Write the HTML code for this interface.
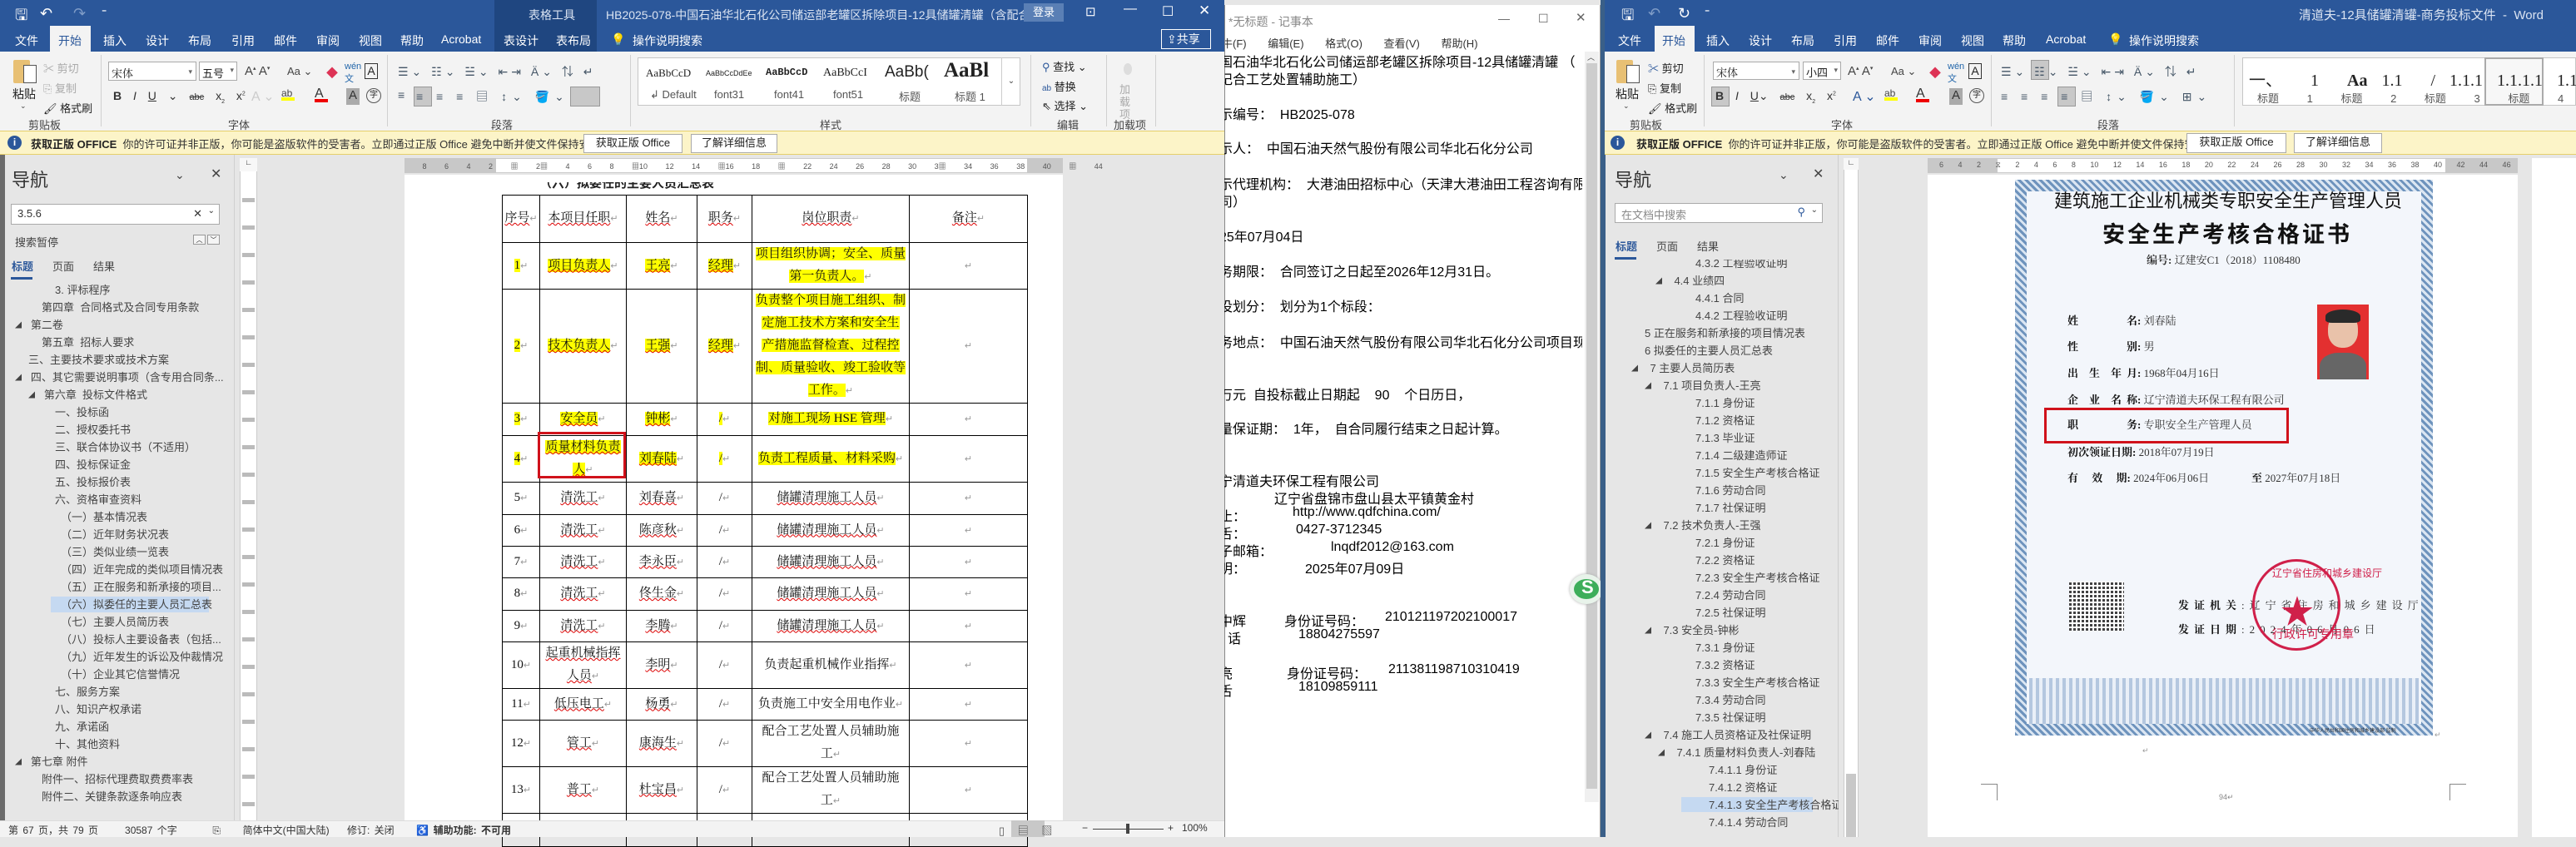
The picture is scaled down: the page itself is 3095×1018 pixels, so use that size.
<!DOCTYPE html>
<html><head><meta charset="utf-8">
<style>
*{margin:0;padding:0;box-sizing:border-box}
body{width:3095px;height:1006px;overflow:hidden;position:relative;background:#e6e6e6;font-family:"Liberation Sans","Noto Sans CJK SC",sans-serif;color:#222}
.a{position:absolute;white-space:nowrap}
.blue{background:#2b579a}
.w{color:#fff}
.tab{position:absolute;top:39px;font-size:14px;color:#fff}
.rib{background:#f3f3f3}
.g{font-size:13px;color:#444}
.sep{position:absolute;width:1px;background:#d0d0d0}
.nav{font-size:13px;color:#444}
.nav div{height:21px;overflow:visible}
.nav div span{vertical-align:middle;line-height:0}
.yb{background:#fcf4c8;border-top:1px solid #e6cf6a;border-bottom:1px solid #e6cf6a}
.btn{position:absolute;background:#fff;border:1px solid #aaa;font-size:13px;color:#222;text-align:center;line-height:20px}
table{border-collapse:collapse;table-layout:fixed}
td{border:1.5px solid #000;text-align:center;vertical-align:middle;font-size:15px;line-height:27px;color:#111;font-family:"Liberation Serif","Noto Serif CJK SC",serif}
.h{background:#ff0}
.r{color:#999;font-size:11px}
.u{text-decoration:underline wavy #d00;text-decoration-thickness:1px}
.np{position:absolute;font-size:16px;color:#000;font-family:"Liberation Sans","Noto Sans CJK SC",sans-serif;white-space:nowrap}
.cf{position:absolute;font-size:13px;color:#333;font-family:"Liberation Serif","Noto Serif CJK SC",serif;white-space:nowrap}
.cl{font-weight:bold;color:#111}
</style></head><body>

<!-- ================= LEFT WORD ================= -->
<div class="a blue" style="left:0;top:0;width:1471px;height:62px"></div>
<div class="a" style="left:594px;top:0;width:123px;height:62px;background:#1f4680"></div>
<div class="a w" style="left:18px;top:6px;font-size:18px">🖫</div>
<div class="a w" style="left:48px;top:6px;font-size:18px">↶</div>
<div class="a" style="left:88px;top:6px;font-size:18px;color:#7f9cc7">↷</div>
<div class="a w" style="left:122px;top:8px;font-size:12px">⁼</div>
<div class="a" style="left:635px;top:8px;font-size:14px;color:#dbe4f2">表格工具</div>
<div class="a" style="left:728px;top:8px;font-size:14px;color:#dbe4f2">HB2025-078-中国石油华北石化公司储运部老罐区拆除项目-12具储罐清罐（含配合工艺...</div>
<div class="a" style="left:1230px;top:4px;width:48px;height:22px;background:#5a7fb5;color:#fff;font-size:13px;text-align:center;line-height:22px">登录</div>
<div class="a w" style="left:1304px;top:5px;font-size:15px">⊡</div>
<div class="a w" style="left:1350px;top:2px;font-size:16px">—</div>
<div class="a w" style="left:1396px;top:4px;font-size:16px">☐</div>
<div class="a w" style="left:1440px;top:3px;font-size:17px">✕</div>
<div class="a" style="left:60px;top:31px;width:49px;height:32px;background:#f3f3f3"></div>
<div class="tab" style="left:18px">文件</div>
<div class="tab" style="left:70px;color:#2b579a">开始</div>
<div class="tab" style="left:124px">插入</div>
<div class="tab" style="left:175px">设计</div>
<div class="tab" style="left:226px">布局</div>
<div class="tab" style="left:278px">引用</div>
<div class="tab" style="left:329px">邮件</div>
<div class="tab" style="left:380px">审阅</div>
<div class="tab" style="left:431px">视图</div>
<div class="tab" style="left:481px">帮助</div>
<div class="tab" style="left:530px">Acrobat</div>
<div class="tab" style="left:605px">表设计</div>
<div class="tab" style="left:668px">表布局</div>
<div class="tab" style="left:734px">💡</div>
<div class="tab" style="left:760px">操作说明搜索</div>
<div class="a" style="left:1395px;top:35px;width:60px;height:24px;border:1px solid #fff;color:#fff;font-size:14px;line-height:22px;padding-left:6px">⇪共享</div>

<div class="a rib" style="left:0;top:62px;width:1471px;height:95px"></div>
<div class="a" style="left:16px;top:72px;width:20px;height:28px;background:#e8c074;border-radius:2px"></div>
<div class="a" style="left:28px;top:78px;width:16px;height:22px;background:#fff;border:1px solid #555"></div>
<div class="a g" style="left:15px;top:103px;font-size:14px;color:#222">粘贴</div>
<div class="a g" style="left:24px;top:122px;font-size:9px">⌄</div>
<div class="a g" style="left:52px;top:72px;color:#aaa">✂ 剪切</div>
<div class="a g" style="left:52px;top:96px;color:#aaa">⎘ 复制</div>
<div class="a g" style="left:52px;top:120px;color:#222">🖌 格式刷</div>
<div class="a g" style="left:34px;top:140px">剪贴板</div>
<div class="sep" style="left:121px;top:66px;height:86px"></div>
<div class="a" style="left:130px;top:74px;width:106px;height:23px;background:#fff;border:1px solid #aaa;font-size:13px;padding:3px 3px;font-family:'Noto Serif CJK SC',serif">宋体<span style="position:absolute;right:4px;top:4px;font-size:9px;color:#666">▾</span></div>
<div class="a" style="left:239px;top:74px;width:46px;height:23px;background:#fff;border:1px solid #aaa;font-size:13px;padding:3px 3px">五号<span style="position:absolute;right:3px;top:4px;font-size:9px;color:#666">▾</span></div>
<div class="a g" style="left:294px;top:77px;font-size:15px">A<sup style="font-size:7px">▴</sup> A<sup style="font-size:7px">▾</sup></div>
<div class="a g" style="left:345px;top:78px;font-size:13px">Aa ⌄</div>
<div class="a" style="left:392px;top:78px;font-size:14px;color:#d35">◆</div>
<div class="a" style="left:414px;top:74px;font-size:11px;color:#26a">wén<br>文</div>
<div class="a" style="left:438px;top:76px;width:16px;height:19px;border:1px solid #333;font-size:14px;text-align:center;line-height:17px">A</div>
<div class="a" style="left:136px;top:107px;font-size:14px;color:#333;word-spacing:10px"><b>B</b> <i>I</i> <u>U</u> ⌄ <s style="font-size:11px">abc</s> x<sub style="font-size:7px">2</sub> x<sup style="font-size:7px">2</sup></div>
<div class="a" style="left:302px;top:106px;font-size:16px;color:#ccc">A ⌄</div>
<div class="a" style="left:338px;top:105px;font-size:12px;color:#444">ab<br><span style="display:block;width:16px;height:4px;background:#ff0;margin-top:-2px"></span></div>
<div class="a" style="left:378px;top:104px;font-size:16px;color:#333">A<span style="display:block;width:16px;height:4px;background:#e00;margin-top:-3px"></span></div>
<div class="a" style="left:416px;top:106px;width:16px;height:20px;background:#aaa;font-size:15px;text-align:center;color:#333">A</div>
<div class="a" style="left:440px;top:106px;width:18px;height:18px;border:1px solid #555;border-radius:50%;font-size:10px;text-align:center;line-height:16px">字</div>
<div class="a g" style="left:274px;top:140px">字体</div>
<div class="sep" style="left:465px;top:66px;height:86px"></div>
<div class="a" style="left:478px;top:76px;font-size:14px;color:#456;letter-spacing:4px">☰⌄ ☷⌄ ☱⌄ ⇤⇥ Ä⌄ ⇅ ↵</div>
<div class="a" style="left:478px;top:106px;font-size:14px;color:#456;letter-spacing:5px">≡</div>
<div class="a" style="left:497px;top:104px;width:22px;height:24px;background:#c8c8c8;border:1px solid #999"></div>
<div class="a" style="left:500px;top:106px;font-size:14px;color:#456;letter-spacing:6px">≡ ≡ ≡ ▤ ↕⌄ 🪣⌄</div>
<div class="a" style="left:685px;top:104px;width:36px;height:24px;background:#c8c8c8;border:1px solid #999"></div>
<div class="a g" style="left:590px;top:140px">段落</div>
<div class="sep" style="left:757px;top:66px;height:86px"></div>
<div class="a" style="left:766px;top:69px;width:460px;height:58px;background:#fff;border:1px solid #c6c6c6"></div>
<div class="a" style="left:1203px;top:69px;width:23px;height:58px;border-left:1px solid #ccc;font-size:10px;text-align:center;line-height:58px;color:#444">⌄</div>
<div class="a" style="left:776px;top:80px;font-size:13px;font-family:'Liberation Serif',serif">AaBbCcD</div>
<div class="a" style="left:848px;top:83px;font-size:9px">AaBbCcDdEe</div>
<div class="a" style="left:920px;top:80px;font-size:12px;font-weight:bold;font-family:'Liberation Mono',monospace">AaBbCcD</div>
<div class="a" style="left:989px;top:80px;font-size:14px;font-family:'Liberation Serif',serif">AaBbCcI</div>
<div class="a" style="left:1063px;top:76px;font-size:19px">AaBb(</div>
<div class="a" style="left:1134px;top:71px;font-size:25px;font-weight:bold;font-family:'Liberation Serif',serif">AaBl</div>
<div class="a g" style="left:781px;top:106px;color:#555">↲ Default</div>
<div class="a g" style="left:858px;top:106px;color:#555">font31</div>
<div class="a g" style="left:930px;top:106px;color:#555">font41</div>
<div class="a g" style="left:1001px;top:106px;color:#555">font51</div>
<div class="a g" style="left:1080px;top:106px;color:#555">标题</div>
<div class="a g" style="left:1147px;top:106px;color:#555">标题 1</div>
<div class="a g" style="left:985px;top:140px">样式</div>
<div class="sep" style="left:1238px;top:66px;height:86px"></div>
<div class="a g" style="left:1252px;top:70px;color:#222"><span style="color:#2b579a">⚲</span> 查找 ⌄</div>
<div class="a g" style="left:1252px;top:94px;color:#222"><span style="color:#2b579a;font-size:10px">ab</span> 替换</div>
<div class="a g" style="left:1252px;top:117px;color:#222">⇖ 选择 ⌄</div>
<div class="a g" style="left:1270px;top:140px">编辑</div>
<div class="sep" style="left:1329px;top:66px;height:86px"></div>
<div class="a" style="left:1350px;top:76px;width:10px;height:14px;border-radius:50%;background:#ddd"></div>
<div class="a g" style="left:1345px;top:100px;color:#aaa;white-space:normal;width:20px;line-height:15px">加载项</div>
<div class="a g" style="left:1338px;top:140px">加载项</div>
<div class="sep" style="left:1388px;top:66px;height:86px"></div>

<div class="a yb" style="left:0;top:157px;width:1471px;height:29px"></div>
<div class="a" style="left:9px;top:163px;width:17px;height:17px;border-radius:50%;background:#2b579a;color:#fff;font-size:12px;text-align:center;line-height:17px;font-weight:bold">i</div>
<div class="a" style="left:37px;top:163px;font-size:13px"><b>获取正版 OFFICE</b>&nbsp;&nbsp;<span style="color:#333">你的许可证并非正版，你可能是盗版软件的受害者。立即通过正版 Office 避免中断并使文件保持安全。</span></div>
<div class="btn" style="left:701px;top:161px;width:119px;height:23px">获取正版 Office</div>
<div class="btn" style="left:830px;top:161px;width:104px;height:23px">了解详细信息</div>

<!-- left nav -->
<div class="a" style="left:0;top:186px;width:6px;height:800px;background:#6b6b6b"></div>
<div class="a" style="left:6px;top:186px;width:276px;height:800px;background:#e6e6e6;border-right:1px solid #cfcfcf"></div>
<div class="a" style="left:14px;top:199px;font-size:22px;color:#333">导航</div>
<div class="a" style="left:210px;top:202px;font-size:14px;color:#444">⌄</div>
<div class="a" style="left:253px;top:199px;font-size:16px;color:#444">✕</div>
<div class="a" style="left:13px;top:245px;width:251px;height:25px;background:#fff;border:1px solid #aaa;font-size:13px;padding:3px 7px;color:#333">3.5.6<span style="position:absolute;right:20px;top:3px">✕</span><span style="position:absolute;right:5px;top:2px;font-size:10px">⌄</span></div>
<div class="a nav" style="left:18px;top:281px">搜索暂停</div>
<div class="a" style="left:232px;top:282px;width:15px;height:12px;border:1px solid #999;background:#f5f5f5;font-size:8px;text-align:center">︿</div>
<div class="a" style="left:249px;top:282px;width:15px;height:12px;border:1px solid #999;background:#f5f5f5;font-size:8px;text-align:center">﹀</div>
<div class="a" style="left:14px;top:310px;font-size:13px;color:#2b579a;font-weight:bold">标题</div>
<div class="a" style="left:13px;top:333px;width:26px;height:3px;background:#2b579a"></div>
<div class="a nav" style="left:63px;top:310px">页面</div>
<div class="a nav" style="left:112px;top:310px">结果</div>
<div class="a" style="left:61px;top:717px;width:190px;height:19px;background:#c5d9f1"></div>
<div class="a nav" style="left:0;top:338px;line-height:21px">
<div style="padding-left:66px">3. 评标程序</div>
<div style="padding-left:50px">第四章&nbsp; 合同格式及合同专用条款</div>
<div style="padding-left:18px"><span style="font-size:8px">◢</span>&nbsp;&nbsp;&nbsp;第二卷</div>
<div style="padding-left:50px">第五章&nbsp; 招标人要求</div>
<div style="padding-left:34px">三、主要技术要求或技术方案</div>
<div style="padding-left:18px"><span style="font-size:8px">◢</span>&nbsp;&nbsp;&nbsp;四、其它需要说明事项（含专用合同条...</div>
<div style="padding-left:34px"><span style="font-size:8px">◢</span>&nbsp;&nbsp;&nbsp;第六章&nbsp; 投标文件格式</div>
<div style="padding-left:66px">一、投标函</div>
<div style="padding-left:66px">二、授权委托书</div>
<div style="padding-left:66px">三、联合体协议书（不适用）</div>
<div style="padding-left:66px">四、投标保证金</div>
<div style="padding-left:66px">五、投标报价表</div>
<div style="padding-left:66px">六、资格审查资料</div>
<div style="padding-left:73px">（一）基本情况表</div>
<div style="padding-left:73px">（二）近年财务状况表</div>
<div style="padding-left:73px">（三）类似业绩一览表</div>
<div style="padding-left:73px">（四）近年完成的类似项目情况表</div>
<div style="padding-left:73px">（五）正在服务和新承接的项目...</div>
<div style="padding-left:73px">（六）拟委任的主要人员汇总表</div>
<div style="padding-left:73px">（七）主要人员简历表</div>
<div style="padding-left:73px">（八）投标人主要设备表（包括...</div>
<div style="padding-left:73px">（九）近年发生的诉讼及仲裁情况</div>
<div style="padding-left:73px">（十）企业其它信誉情况</div>
<div style="padding-left:66px">七、服务方案</div>
<div style="padding-left:66px">八、知识产权承诺</div>
<div style="padding-left:66px">九、承诺函</div>
<div style="padding-left:66px">十、其他资料</div>
<div style="padding-left:18px"><span style="font-size:8px">◢</span>&nbsp;&nbsp;&nbsp;第七章 附件</div>
<div style="padding-left:50px">附件一、招标代理费取费费率表</div>
<div style="padding-left:50px">附件二、关键条款逐条响应表</div>
</div>
<div class="a" style="left:288px;top:190px;width:21px;height:796px;background:#fff;border-left:1px solid #ccc;border-right:1px solid #ccc"></div>
<div class="a" style="left:288px;top:190px;width:21px;height:16px;background:#f7f7f7;font-size:9px;text-align:center">∟</div>
<div class="a" style="left:291px;top:210px;width:15px;height:770px;background:repeating-linear-gradient(to bottom,transparent 0 28px,#bbb 28px 33px)"></div>
<div class="a" style="left:486px;top:190px;width:791px;height:18px;background:#fff;border:1px solid #ccc"></div>
<div class="a" style="left:486px;top:190px;width:110px;height:18px;background:#c8c8c8"></div>
<div class="a" style="left:1234px;top:190px;width:43px;height:18px;background:#c8c8c8"></div>
<div class="a" style="left:486px;top:193px;width:790px;font-size:9px;color:#555;word-spacing:19px">&nbsp;8 6 4 2 ▦ 2▦ 4 6 8 ▦10 12 14 ▦16 18 ▦ 22 24 26 28 30 3▦ 34 36 38 40 ▦ 44</div>
<div class="a" style="left:486px;top:210px;width:791px;height:776px;background:#fff"></div>
<div class="a" style="left:648px;top:209px;font-size:15px;color:#222;font-weight:bold;clip-path:inset(10px 0 0 0)">（六）拟委任的主要人员汇总表</div>
<div class="a" style="left:603px;top:234px">
<table style="width:631px">
<colgroup><col style="width:45px"><col style="width:104px"><col style="width:85px"><col style="width:66px"><col style="width:189px"><col style="width:142px"></colgroup>
<tr style="height:57px"><td><span class="u">序号</span><span class="r">↵</span></td><td><span class="u">本项目任职</span><span class="r">↵</span></td><td><span class="u">姓名</span><span class="r">↵</span></td><td><span class="u">职务</span><span class="r">↵</span></td><td><span class="u">岗位职责</span><span class="r">↵</span></td><td><span class="u">备注</span><span class="r">↵</span></td></tr>
<tr style="height:54px"><td><span class="h">1</span><span class="r">↵</span></td><td><span class="h u">项目负责人</span><span class="r">↵</span></td><td><span class="h u">王亮</span><span class="r">↵</span></td><td><span class="h u">经理</span><span class="r">↵</span></td><td><span class="h">项目组织协调；安全、质量<br>第一负责人。</span><span class="r">↵</span></td><td><span class="r">↵</span></td></tr>
<tr style="height:137px"><td><span class="h">2</span><span class="r">↵</span></td><td><span class="h u">技术负责人</span><span class="r">↵</span></td><td><span class="h u">王强</span><span class="r">↵</span></td><td><span class="h u">经理</span><span class="r">↵</span></td><td><span class="h">负责整个项目施工组织、制<br>定施工技术方案和安全生<br>产措施监督检查、过程控<br>制、质量验收、竣工验收等<br>工作。</span><span class="r">↵</span></td><td><span class="r">↵</span></td></tr>
<tr style="height:39px"><td><span class="h">3</span><span class="r">↵</span></td><td><span class="h u">安全员</span><span class="r">↵</span></td><td><span class="h u">钟彬</span><span class="r">↵</span></td><td><span class="h">/</span><span class="r">↵</span></td><td><span class="h">对施工现场 HSE 管理</span><span class="r">↵</span></td><td><span class="r">↵</span></td></tr>
<tr style="height:55px"><td><span class="h">4</span><span class="r">↵</span></td><td><span class="h u">质量材料负责<br>人</span><span class="r">↵</span></td><td><span class="h u">刘春陆</span><span class="r">↵</span></td><td><span class="h">/</span><span class="r">↵</span></td><td><span class="h">负责工程质量、材料采购</span><span class="r">↵</span></td><td><span class="r">↵</span></td></tr>
<tr style="height:39px"><td>5<span class="r">↵</span></td><td><span class="u">清洗工</span><span class="r">↵</span></td><td><span class="u">刘春喜</span><span class="r">↵</span></td><td>/<span class="r">↵</span></td><td><span class="u">储罐清理施工人员</span><span class="r">↵</span></td><td><span class="r">↵</span></td></tr>
<tr style="height:38px"><td>6<span class="r">↵</span></td><td><span class="u">清洗工</span><span class="r">↵</span></td><td><span class="u">陈彦秋</span><span class="r">↵</span></td><td>/<span class="r">↵</span></td><td><span class="u">储罐清理施工人员</span><span class="r">↵</span></td><td><span class="r">↵</span></td></tr>
<tr style="height:38px"><td>7<span class="r">↵</span></td><td><span class="u">清洗工</span><span class="r">↵</span></td><td><span class="u">李永臣</span><span class="r">↵</span></td><td>/<span class="r">↵</span></td><td><span class="u">储罐清理施工人员</span><span class="r">↵</span></td><td><span class="r">↵</span></td></tr>
<tr style="height:39px"><td>8<span class="r">↵</span></td><td><span class="u">清洗工</span><span class="r">↵</span></td><td><span class="u">佟生金</span><span class="r">↵</span></td><td>/<span class="r">↵</span></td><td><span class="u">储罐清理施工人员</span><span class="r">↵</span></td><td><span class="r">↵</span></td></tr>
<tr style="height:38px"><td>9<span class="r">↵</span></td><td><span class="u">清洗工</span><span class="r">↵</span></td><td><span class="u">李腾</span><span class="r">↵</span></td><td>/<span class="r">↵</span></td><td><span class="u">储罐清理施工人员</span><span class="r">↵</span></td><td><span class="r">↵</span></td></tr>
<tr style="height:56px"><td>10<span class="r">↵</span></td><td><span class="u">起重机械指挥<br>人员</span><span class="r">↵</span></td><td><span class="u">李明</span><span class="r">↵</span></td><td>/<span class="r">↵</span></td><td>负责起重机械作业指挥<span class="r">↵</span></td><td><span class="r">↵</span></td></tr>
<tr style="height:38px"><td>11<span class="r">↵</span></td><td><span class="u">低压电工</span><span class="r">↵</span></td><td><span class="u">杨勇</span><span class="r">↵</span></td><td>/<span class="r">↵</span></td><td>负责施工中安全用电作业<span class="r">↵</span></td><td><span class="r">↵</span></td></tr>
<tr style="height:55px"><td>12<span class="r">↵</span></td><td><span class="u">管工</span><span class="r">↵</span></td><td><span class="u">康海生</span><span class="r">↵</span></td><td>/<span class="r">↵</span></td><td>配合工艺处置人员辅助施<br>工<span class="r">↵</span></td><td><span class="r">↵</span></td></tr>
<tr style="height:56px"><td>13<span class="r">↵</span></td><td><span class="u">普工</span><span class="r">↵</span></td><td><span class="u">杜宝昌</span><span class="r">↵</span></td><td>/<span class="r">↵</span></td><td>配合工艺处置人员辅助施<br>工<span class="r">↵</span></td><td><span class="r">↵</span></td></tr>
<tr style="height:40px"><td></td><td></td><td></td><td></td><td></td><td></td></tr>
</table></div>
<div class="a" style="left:646px;top:519px;width:106px;height:56px;border:3px solid #d0121b"></div>
<div class="a" style="left:0;top:986px;width:1471px;height:20px;background:#f3f3f3;border-top:1px solid #ddd"></div>
<div class="a" style="left:10px;top:989px;font-size:12px;color:#333;word-spacing:2px">第 67 页，共 79 页&nbsp;&nbsp;&nbsp;&nbsp;&nbsp;&nbsp;30587 个字&nbsp;&nbsp;&nbsp;&nbsp;&nbsp;&nbsp;&nbsp;&nbsp;⎘&nbsp;&nbsp;&nbsp;&nbsp;&nbsp;简体中文(中国大陆)&nbsp;&nbsp;&nbsp;&nbsp;修订: 关闭&nbsp;&nbsp;&nbsp;&nbsp;&nbsp;♿ <b>辅助功能: 不可用</b></div>
<div class="a" style="left:1215px;top:986px;width:40px;height:20px;background:#c8c8c8"></div>
<div class="a" style="left:1200px;top:988px;font-size:13px;color:#555;word-spacing:12px">▯ ▤ ▧</div>
<div class="a" style="left:1300px;top:988px;font-size:12px;color:#333">−</div>
<div class="a" style="left:1313px;top:996px;width:85px;height:1px;background:#444"></div>
<div class="a" style="left:1353px;top:990px;width:4px;height:12px;background:#444"></div>
<div class="a" style="left:1403px;top:988px;font-size:12px;color:#333">+&nbsp;&nbsp;&nbsp;100%</div>

<!-- ================= NOTEPAD ================= -->
<div class="a" style="left:1471px;top:6px;width:452px;height:1000px;background:#fff;border-left:1px solid #888;border-right:1px solid #999;overflow:hidden">
  <div class="a" style="left:4px;top:10px;font-size:14px;color:#888">*无标题 - 记事本</div>
  <div class="a" style="left:328px;top:8px;font-size:14px;color:#666">—</div>
  <div class="a" style="left:376px;top:8px;font-size:14px;color:#666">☐</div>
  <div class="a" style="left:421px;top:6px;font-size:15px;color:#666">✕</div>
  <div class="a" style="left:-4px;top:36px;font-size:13px;color:#333;word-spacing:22px">牛(F) 编辑(E) 格式(O) 查看(V) 帮助(H)</div>
  <div class="a" style="left:432px;top:56px;width:17px;height:902px;background:#f0f0f0"></div>
  <div class="a" style="left:434px;top:70px;width:13px;height:872px;background:#cdcdcd"></div>
  <div class="a" style="left:435px;top:56px;font-size:9px;color:#444">︿</div>
</div>
<div class="a" style="left:1471px;top:61px;width:430px;height:900px;overflow:hidden">
<div class="np" style="left:-6px;top:0">国石油华北石化公司储运部老罐区拆除项目-12具储罐清罐 （</div>
<div class="np" style="left:-6px;top:21px">记合工艺处置辅助施工）</div>
<div class="np" style="left:-6px;top:63px">示编号：&nbsp;&nbsp;HB2025-078</div>
<div class="np" style="left:-6px;top:104px">示人：&nbsp;&nbsp;中国石油天然气股份有限公司华北石化分公司</div>
<div class="np" style="left:-6px;top:147px">示代理机构：&nbsp;&nbsp;大港油田招标中心（天津大港油田工程咨询有限</div>
<div class="np" style="left:-6px;top:168px">司）</div>
<div class="np" style="left:-6px;top:210px">25年07月04日</div>
<div class="np" style="left:-6px;top:252px">务期限：&nbsp;&nbsp;合同签订之日起至2026年12月31日。</div>
<div class="np" style="left:-6px;top:294px">没划分：&nbsp;&nbsp;划分为1个标段：</div>
<div class="np" style="left:-6px;top:337px">务地点：&nbsp;&nbsp;中国石油天然气股份有限公司华北石化分公司项目现</div>
<div class="np" style="left:-6px;top:400px">万元&nbsp;&nbsp;自投标截止日期起&nbsp;&nbsp;&nbsp;&nbsp;90&nbsp;&nbsp;&nbsp;&nbsp;个日历日，</div>
<div class="np" style="left:-6px;top:441px">量保证期：&nbsp;&nbsp;1年，&nbsp;&nbsp;自合同履行结束之日起计算。</div>
<div class="np" style="left:-6px;top:504px">宁清道夫环保工程有限公司</div>
<div class="np" style="left:60px;top:525px">辽宁省盘锦市盘山县太平镇黄金村</div>
<div class="np" style="left:-6px;top:546px">止：</div><div class="np" style="left:82px;top:546px">http://www.qdfchina.com/</div>
<div class="np" style="left:-6px;top:567px">舌：</div><div class="np" style="left:86px;top:567px">0427-3712345</div>
<div class="np" style="left:-6px;top:588px">子邮箱：</div><div class="np" style="left:128px;top:588px">lnqdf2012@163.com</div>
<div class="np" style="left:-6px;top:609px">明：</div><div class="np" style="left:97px;top:609px">2025年07月09日</div>
<div class="np" style="left:-6px;top:672px">中辉</div><div class="np" style="left:72px;top:672px">身份证号码：</div><div class="np" style="left:193px;top:672px">210121197202100017</div>
<div class="np" style="left:4px;top:693px">话</div><div class="np" style="left:89px;top:693px">18804275597</div>
<div class="np" style="left:-6px;top:735px">亮</div><div class="np" style="left:75px;top:735px">身份证号码：</div><div class="np" style="left:197px;top:735px">211381198710310419</div>
<div class="np" style="left:-6px;top:756px">舌</div><div class="np" style="left:89px;top:756px">18109859111</div>
</div>
<div class="a" style="left:1886px;top:690px;width:40px;height:36px;border-radius:50%;background:#e8f3ea;box-shadow:0 0 3px #aaa"></div>
<div class="a" style="left:1891px;top:696px;width:30px;height:24px;border-radius:50%;background:#3dae5a"></div>
<div class="a" style="left:1900px;top:693px;font-size:22px;color:#fff;font-weight:bold">S</div>
<div class="a" style="left:1923px;top:0;width:6px;height:1006px;background:#3a5f88"></div>

<!-- ================= RIGHT WORD ================= -->
<div class="a blue" style="left:1928px;top:0;width:1167px;height:62px"></div>
<div class="a w" style="left:1948px;top:6px;font-size:18px">🖫</div>
<div class="a" style="left:1980px;top:6px;font-size:18px;color:#7f9cc7">↶</div>
<div class="a w" style="left:2016px;top:6px;font-size:18px">↻</div>
<div class="a w" style="left:2048px;top:8px;font-size:12px">⁼</div>
<div class="a" style="left:2762px;top:7px;font-size:15px;color:#dbe4f2">清道夫-12具储罐清罐-商务投标文件&nbsp; -&nbsp; Word</div>
<div class="a" style="left:1988px;top:31px;width:48px;height:32px;background:#f3f3f3"></div>
<div class="tab" style="left:1944px">文件</div>
<div class="tab" style="left:1997px;color:#2b579a">开始</div>
<div class="tab" style="left:2050px">插入</div>
<div class="tab" style="left:2101px">设计</div>
<div class="tab" style="left:2152px">布局</div>
<div class="tab" style="left:2203px">引用</div>
<div class="tab" style="left:2254px">邮件</div>
<div class="tab" style="left:2305px">审阅</div>
<div class="tab" style="left:2356px">视图</div>
<div class="tab" style="left:2406px">帮助</div>
<div class="tab" style="left:2458px">Acrobat</div>
<div class="tab" style="left:2533px">💡</div>
<div class="tab" style="left:2558px">操作说明搜索</div>
<div class="a rib" style="left:1928px;top:62px;width:1167px;height:95px"></div>
<div class="a" style="left:1942px;top:72px;width:20px;height:28px;background:#e8c074;border-radius:2px"></div>
<div class="a" style="left:1954px;top:78px;width:16px;height:22px;background:#fff;border:1px solid #555"></div>
<div class="a g" style="left:1941px;top:103px;font-size:14px;color:#222">粘贴</div>
<div class="a g" style="left:1950px;top:122px;font-size:9px">⌄</div>
<div class="a g" style="left:1980px;top:72px;color:#222"><span style="color:#2b579a">✂</span> 剪切</div>
<div class="a g" style="left:1980px;top:96px;color:#222">⎘ 复制</div>
<div class="a g" style="left:1980px;top:120px;color:#222">🖌 格式刷</div>
<div class="a g" style="left:1958px;top:140px">剪贴板</div>
<div class="sep" style="left:2047px;top:66px;height:86px"></div>
<div class="a" style="left:2058px;top:74px;width:104px;height:22px;background:#fff;border:1px solid #aaa;font-size:13px;padding:2px 3px;font-family:'Noto Serif CJK SC',serif">宋体<span style="position:absolute;right:4px;top:4px;font-size:9px;color:#666">▾</span></div>
<div class="a" style="left:2166px;top:74px;width:46px;height:22px;background:#fff;border:1px solid #aaa;font-size:13px;padding:2px 3px">小四<span style="position:absolute;right:3px;top:4px;font-size:9px;color:#666">▾</span></div>
<div class="a g" style="left:2220px;top:77px;font-size:15px">A<sup style="font-size:7px">▴</sup> A<sup style="font-size:7px">▾</sup></div>
<div class="a g" style="left:2272px;top:78px;font-size:13px">Aa ⌄</div>
<div class="a" style="left:2318px;top:78px;font-size:14px;color:#d35">◆</div>
<div class="a" style="left:2340px;top:74px;font-size:11px;color:#26a">wén<br>文</div>
<div class="a" style="left:2365px;top:76px;width:16px;height:19px;border:1px solid #333;font-size:14px;text-align:center;line-height:17px">A</div>
<div class="a" style="left:2056px;top:104px;width:22px;height:24px;background:#c8c8c8;border:1px solid #999"></div>
<div class="a" style="left:2061px;top:107px;font-size:14px;color:#333;word-spacing:10px"><b>B</b> <i>I</i> <u>U</u>⌄ <s style="font-size:11px">abc</s> x<sub style="font-size:7px">2</sub> x<sup style="font-size:7px">2</sup></div>
<div class="a" style="left:2226px;top:106px;font-size:16px;color:#2b579a">A ⌄</div>
<div class="a" style="left:2264px;top:105px;font-size:12px;color:#444">ab<span style="display:block;width:16px;height:4px;background:#ff0;margin-top:-2px"></span></div>
<div class="a" style="left:2302px;top:104px;font-size:16px;color:#333">A<span style="display:block;width:16px;height:4px;background:#e00;margin-top:-3px"></span></div>
<div class="a" style="left:2342px;top:106px;width:16px;height:20px;background:#aaa;font-size:15px;text-align:center;color:#333">A</div>
<div class="a" style="left:2366px;top:106px;width:18px;height:18px;border:1px solid #555;border-radius:50%;font-size:10px;text-align:center;line-height:16px">字</div>
<div class="a g" style="left:2200px;top:140px">字体</div>
<div class="sep" style="left:2392px;top:66px;height:86px"></div>
<div class="a" style="left:2440px;top:72px;width:22px;height:24px;background:#c8c8c8;border:1px solid #999"></div>
<div class="a" style="left:2404px;top:76px;font-size:14px;color:#456;letter-spacing:4px">☰⌄ ☷⌄ ☱⌄ ⇤⇥ Ä⌄ ⇅ ↵</div>
<div class="a" style="left:2472px;top:104px;width:22px;height:24px;background:#c8c8c8;border:1px solid #999"></div>
<div class="a" style="left:2404px;top:106px;font-size:14px;color:#456;letter-spacing:6px">≡ ≡ ≡ ≡ ▤ ↕⌄ 🪣⌄ ⊞⌄</div>
<div class="a g" style="left:2520px;top:140px">段落</div>
<div class="sep" style="left:2684px;top:66px;height:86px"></div>
<div class="a" style="left:2694px;top:69px;width:401px;height:58px;background:#fff;border:1px solid #c6c6c6"></div>
<div class="a" style="left:2985px;top:69px;width:71px;height:58px;border:2px solid #aaa;background:#f7f7f7"></div>
<div class="a" style="left:2702px;top:80px;font-size:20px;font-family:'Liberation Serif',serif;word-spacing:12px">一、&nbsp; 1&nbsp; <b>Aa</b> 1.1&nbsp; / 1.1.1 1.1.1.1 1.1.</div>
<div class="a g" style="left:2712px;top:108px;color:#555;word-spacing:30px">标题 1 标题 2 标题 3 标题 4 标题 5 标题</div>
<div class="a yb" style="left:1928px;top:157px;width:1167px;height:29px"></div>
<div class="a" style="left:1935px;top:163px;width:17px;height:17px;border-radius:50%;background:#2b579a;color:#fff;font-size:12px;text-align:center;line-height:17px;font-weight:bold">i</div>
<div class="a" style="left:1966px;top:163px;font-size:13px"><b>获取正版 OFFICE</b>&nbsp;&nbsp;<span style="color:#333">你的许可证并非正版，你可能是盗版软件的受害者。立即通过正版 Office 避免中断并使文件保持安全。</span></div>
<div class="btn" style="left:2627px;top:160px;width:120px;height:24px">获取正版 Office</div>
<div class="btn" style="left:2756px;top:160px;width:106px;height:24px">了解详细信息</div>

<!-- right nav -->
<div class="a" style="left:1929px;top:186px;width:280px;height:820px;background:#e6e6e6;border-right:1px solid #cfcfcf"></div>
<div class="a" style="left:1940px;top:199px;font-size:22px;color:#333">导航</div>
<div class="a" style="left:2137px;top:202px;font-size:14px;color:#444">⌄</div>
<div class="a" style="left:2178px;top:199px;font-size:16px;color:#444">✕</div>
<div class="a" style="left:1940px;top:244px;width:250px;height:24px;background:#fff;border:1px solid #aaa;font-size:13px;padding:3px 7px;color:#888">在文档中搜索<span style="position:absolute;right:20px;top:2px;color:#2b579a">⚲</span><span style="position:absolute;right:5px;top:2px;font-size:10px;color:#444">⌄</span></div>
<div class="a" style="left:1941px;top:286px;font-size:13px;color:#2b579a;font-weight:bold">标题</div>
<div class="a" style="left:1940px;top:309px;width:26px;height:3px;background:#2b579a"></div>
<div class="a nav" style="left:1990px;top:286px">页面</div>
<div class="a nav" style="left:2039px;top:286px">结果</div>
<div class="a" style="left:2020px;top:958px;width:158px;height:18px;background:#c5d9f1"></div>
<div class="a nav" style="left:1929px;top:312px;width:280px;height:694px;overflow:hidden;line-height:21px">
<div style="padding-left:108px;margin-top:-6px">4.3.2 工程验收证明</div>
<div style="padding-left:60px"><span style="font-size:8px">◢</span>&nbsp;&nbsp;&nbsp;&nbsp;4.4 业绩四</div>
<div style="padding-left:108px">4.4.1 合同</div>
<div style="padding-left:108px">4.4.2 工程验收证明</div>
<div style="padding-left:47px">5 正在服务和新承接的项目情况表</div>
<div style="padding-left:47px">6 拟委任的主要人员汇总表</div>
<div style="padding-left:31px"><span style="font-size:8px">◢</span>&nbsp;&nbsp;&nbsp;&nbsp;7 主要人员简历表</div>
<div style="padding-left:47px"><span style="font-size:8px">◢</span>&nbsp;&nbsp;&nbsp;&nbsp;7.1 项目负责人-王亮</div>
<div style="padding-left:108px">7.1.1 身份证</div>
<div style="padding-left:108px">7.1.2 资格证</div>
<div style="padding-left:108px">7.1.3 毕业证</div>
<div style="padding-left:108px">7.1.4 二级建造师证</div>
<div style="padding-left:108px">7.1.5 安全生产考核合格证</div>
<div style="padding-left:108px">7.1.6 劳动合同</div>
<div style="padding-left:108px">7.1.7 社保证明</div>
<div style="padding-left:47px"><span style="font-size:8px">◢</span>&nbsp;&nbsp;&nbsp;&nbsp;7.2 技术负责人-王强</div>
<div style="padding-left:108px">7.2.1 身份证</div>
<div style="padding-left:108px">7.2.2 资格证</div>
<div style="padding-left:108px">7.2.3 安全生产考核合格证</div>
<div style="padding-left:108px">7.2.4 劳动合同</div>
<div style="padding-left:108px">7.2.5 社保证明</div>
<div style="padding-left:47px"><span style="font-size:8px">◢</span>&nbsp;&nbsp;&nbsp;&nbsp;7.3 安全员-钟彬</div>
<div style="padding-left:108px">7.3.1 身份证</div>
<div style="padding-left:108px">7.3.2 资格证</div>
<div style="padding-left:108px">7.3.3 安全生产考核合格证</div>
<div style="padding-left:108px">7.3.4 劳动合同</div>
<div style="padding-left:108px">7.3.5 社保证明</div>
<div style="padding-left:47px"><span style="font-size:8px">◢</span>&nbsp;&nbsp;&nbsp;&nbsp;7.4 施工人员资格证及社保证明</div>
<div style="padding-left:63px"><span style="font-size:8px">◢</span>&nbsp;&nbsp;&nbsp;&nbsp;7.4.1 质量材料负责人-刘春陆</div>
<div style="padding-left:124px">7.4.1.1 身份证</div>
<div style="padding-left:124px">7.4.1.2 资格证</div>
<div style="padding-left:124px">7.4.1.3 安全生产考核合格证</div>
<div style="padding-left:124px">7.4.1.4 劳动合同</div>
</div>
<div class="a" style="left:2215px;top:190px;width:18px;height:816px;background:#fff;border-left:1px solid #ccc;border-right:1px solid #ccc"></div>
<div class="a" style="left:2215px;top:190px;width:18px;height:14px;background:#f7f7f7;font-size:9px;text-align:center">∟</div>
<div class="a" style="left:2218px;top:930px;width:12px;height:76px;background:#c8c8c8"></div>
<div class="a" style="left:2316px;top:190px;width:709px;height:18px;background:#fff;border:1px solid #ccc"></div>
<div class="a" style="left:2316px;top:190px;width:84px;height:18px;background:#c8c8c8"></div>
<div class="a" style="left:2938px;top:190px;width:87px;height:18px;background:#c8c8c8"></div>
<div class="a" style="left:2330px;top:193px;font-size:9px;color:#555;word-spacing:15px">6 4 2 ⧖ 2 4 6 8 10 12 14 16 18 20 22 24 26 28 30 32 34 36 38 40 42 44 46 48</div>
<div class="a" style="left:2316px;top:210px;width:709px;height:796px;background:#fff"></div>
<div class="a" style="left:3025px;top:190px;width:17px;height:816px;background:#e6e6e6"></div>
<div class="a" style="left:3042px;top:190px;width:53px;height:816px;background:#fff"></div>
<div class="a" style="left:2421px;top:216px;width:502px;height:668px;background:#f3f6fb;border:14px solid #9cb6d4;border-image:repeating-linear-gradient(45deg,#6e93bd 0 3px,#dbe6f2 3px 6px) 14"></div>
<div class="a" style="left:2438px;top:815px;width:468px;height:55px;background:repeating-linear-gradient(90deg,#8aa8cc 0 4px,#e3ebf5 4px 8px);opacity:.6"></div>
<div class="a" style="left:2468px;top:224px;font-size:22px;color:#111;font-family:'Noto Sans CJK SC',sans-serif">建筑施工企业机械类专职安全生产管理人员</div>
<div class="a" style="left:2526px;top:260px;font-size:27px;font-weight:bold;color:#111;letter-spacing:3px;font-family:'Noto Sans CJK SC',sans-serif">安全生产考核合格证书</div>
<div class="cf" style="left:2579px;top:302px"><b>编号:</b> 辽建安C1（2018）1108480</div>
<div class="cf" style="left:2484px;top:375px"><span class="cl">姓</span></div><div class="cf" style="left:2555px;top:375px"><span class="cl">名:</span> 刘春陆</div>
<div class="cf" style="left:2484px;top:406px"><span class="cl">性</span></div><div class="cf" style="left:2555px;top:406px"><span class="cl">别:</span> 男</div>
<div class="cf" style="left:2484px;top:438px;letter-spacing:13px"><span class="cl">出生年</span></div><div class="cf" style="left:2555px;top:438px"><span class="cl">月:</span> 1968年04月16日</div>
<div class="cf" style="left:2484px;top:470px;letter-spacing:13px"><span class="cl">企业名</span></div><div class="cf" style="left:2555px;top:470px"><span class="cl">称:</span> 辽宁清道夫环保工程有限公司</div>
<div class="cf" style="left:2484px;top:500px"><span class="cl">职</span></div><div class="cf" style="left:2555px;top:500px"><span class="cl">务:</span> 专职安全生产管理人员</div>
<div class="cf" style="left:2484px;top:533px"><span class="cl">初次领证日期:</span> 2018年07月19日</div>
<div class="cf" style="left:2484px;top:564px"><span class="cl">有&nbsp;&nbsp;&nbsp;&nbsp;&nbsp;效&nbsp;&nbsp;&nbsp;&nbsp;&nbsp;期:</span> 2024年06月06日</div>
<div class="cf" style="left:2705px;top:564px"><span class="cl">至</span> 2027年07月18日</div>
<div class="a" style="left:2456px;top:490px;width:294px;height:43px;border:3px solid #d0121b"></div>
<div class="a" style="left:2784px;top:366px;width:62px;height:90px;background:#e33030;overflow:hidden">
  <div class="a" style="left:13px;top:10px;width:36px;height:42px;border-radius:45%;background:#e9c2aa"></div>
  <div class="a" style="left:10px;top:6px;width:42px;height:16px;border-radius:50% 50% 20% 20%;background:#2a2a2a"></div>
  <div class="a" style="left:3px;top:58px;width:56px;height:40px;border-radius:40% 40% 0 0;background:#666"></div>
</div>
<div class="a" style="left:2486px;top:699px;width:66px;height:59px;background:repeating-linear-gradient(90deg,#222 0 3px,#fff 3px 5px),#fff;opacity:.85"></div>
<div class="a" style="left:2486px;top:699px;width:66px;height:59px;background:repeating-linear-gradient(0deg,transparent 0 3px,#fff 3px 5px)"></div>
<div class="cf" style="left:2617px;top:717px;letter-spacing:6px"><span class="cl">发证机关</span>:辽宁省住房和城乡建设厅</div>
<div class="cf" style="left:2617px;top:746px;letter-spacing:6px"><span class="cl">发证日期</span>:2024年06月06日</div>
<div class="a" style="left:2706px;top:672px;width:106px;height:110px;border:3px solid #d0204a;border-radius:50%"></div>
<div class="a" style="left:2740px;top:703px;font-size:40px;color:#d0204a">★</div>
<div class="a" style="left:2730px;top:680px;font-size:12px;color:#d0204a">辽宁省住房和城乡建设厅</div>
<div class="a" style="left:2730px;top:752px;font-size:14px;color:#d0204a">行政许可专用章</div>
<div class="a" style="left:2775px;top:873px;font-size:6px;color:#333">中华人民共和国住房和城乡建设部 监制</div>
<div class="a" style="left:2925px;top:878px;font-size:9px;color:#999">↵</div>
<div class="a" style="left:2574px;top:897px;font-size:9px;color:#999">↵</div>
<div class="a" style="left:2666px;top:953px;font-size:9px;color:#888">94↵</div>
<div class="a" style="left:2943px;top:942px;width:20px;height:20px;border-left:1px solid #888;border-top:1px solid #888"></div>
<div class="a" style="left:2380px;top:942px;width:20px;height:20px;border-right:1px solid #888;border-top:1px solid #888"></div>
</body></html>
